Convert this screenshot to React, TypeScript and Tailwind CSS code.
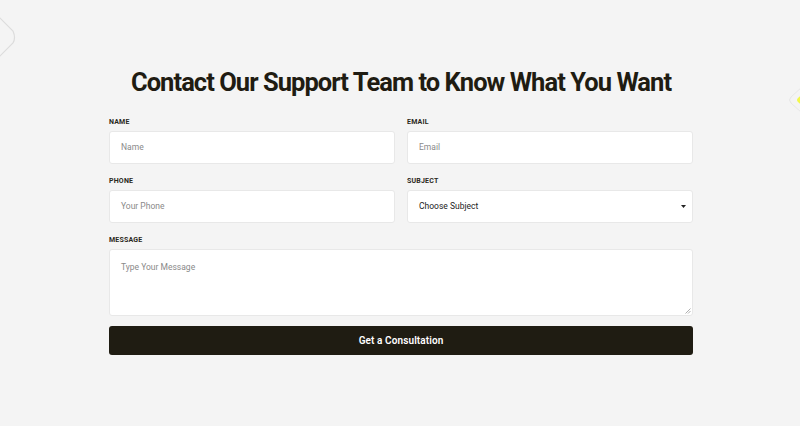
import React from "react";

export default function App() {
  return (
    <div className="relative w-full h-[426px] overflow-hidden bg-[#f4f4f4]" style={{ fontFamily: "Roboto, 'Liberation Sans', sans-serif" }}>
      <svg className="absolute left-0 top-0" width="40" height="70" viewBox="0 0 40 70">
        <path d="M-10 8 L13 31 Q16 38 13 43 L-10 66" fill="none" stroke="#dcdcdc" strokeWidth="1.2" />
      </svg>
      <svg className="absolute right-0 top-[70px]" width="30" height="60" viewBox="0 0 30 60">
        <path d="M44 6 L21 27 Q18 30 21 33 L44 54" fill="none" stroke="#e6e6e6" strokeWidth="1" />
        <path d="M40 18 L28 28 Q26 30 28 32 L40 42 Z" fill="#f2f84a" />
      </svg>
      <div className="relative w-[584px] ml-[109px] pt-[65px]">
        <h1 className="text-center whitespace-nowrap text-[25.5px] leading-[34px] font-bold tracking-[-0.95px] text-[#1f1c12]">
          Contact Our Support Team to Know What You Want
        </h1>
        <div className="mt-[18px] grid grid-cols-2 gap-x-[12px] gap-y-[12px]">
          <Field label="NAME" placeholder="Name" />
          <Field label="EMAIL" placeholder="Email" />
          <Field label="PHONE" placeholder="Your Phone" />
          <div className="flex flex-col">
            <label className="text-[7px] leading-[10px] font-bold text-[#2a2820] tracking-[0.2px]">SUBJECT</label>
            <div className="mt-[4px] h-[33px] bg-white border border-[#e8e8e8] rounded-[3px] flex items-center justify-between pl-[11px] pr-[6px]">
              <span className="text-[8.5px] text-[#222]">Choose Subject</span>
              <svg width="5" height="3" viewBox="0 0 5 3"><path d="M0 0 L5 0 L2.5 3 Z" fill="#222" /></svg>
            </div>
          </div>
          <div className="col-span-2 flex flex-col">
            <label className="text-[7px] leading-[10px] font-bold text-[#2a2820] tracking-[0.2px]">MESSAGE</label>
            <div className="relative mt-[4px] h-[67px] bg-white border border-[#e8e8e8] rounded-[3px] px-[11px] pt-[11px] text-[8.5px] leading-[12px]">
              <span className="text-[#8a8a8a]">Type Your Message</span>
              <svg className="absolute right-[1px] bottom-[1px]" width="6" height="6" viewBox="0 0 6 6">
                <path d="M5.5 0.5 L0.5 5.5 M5.5 3 L3 5.5" stroke="#999" strokeWidth="0.8" />
              </svg>
            </div>
          </div>
        </div>
        <button className="mt-[10px] w-full h-[29px] rounded-[3px] bg-[#1f1c12] text-white text-[10px] font-semibold tracking-[0.1px]">
          Get a Consultation
        </button>
      </div>
    </div>
  );
}

function Field({ label, placeholder }: { label: string; placeholder: string }) {
  return (
    <div className="flex flex-col">
      <label className="text-[7px] leading-[10px] font-bold text-[#2a2820] tracking-[0.2px]">{label}</label>
      <div className="mt-[4px] h-[33px] bg-white border border-[#e8e8e8] rounded-[3px] flex items-center px-[11px]">
        <span className="text-[8.5px] text-[#8a8a8a]">{placeholder}</span>
      </div>
    </div>
  );
}
